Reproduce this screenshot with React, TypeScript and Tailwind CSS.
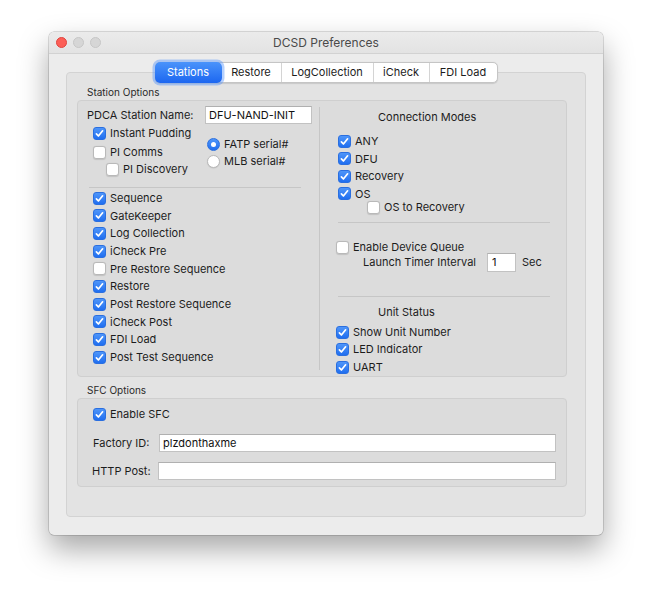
import React from 'react';

const FONT = { fontFamily: 'Inter, "Liberation Sans", Arial, sans-serif' };

function Box({ checked }: { checked: boolean }) {
  if (!checked) {
    return (
      <span className="flex-none w-[13px] h-[13px] rounded-[3px] bg-white border border-[#b9b9b9] shadow-[0_0.5px_1px_rgba(0,0,0,0.12)]" />
    );
  }
  return (
    <span className="flex-none w-[13px] h-[13px] rounded-[3px] bg-gradient-to-b from-[#4e95f9] to-[#1f6ef0] border border-[#2a6fe0] flex items-center justify-center">
      <svg width="11" height="11" viewBox="0 0 11 11" fill="none">
        <path d="M2.4 5.9 L4.4 8 L8.6 2.8" stroke="white" strokeWidth="1.7" strokeLinecap="round" strokeLinejoin="round" />
      </svg>
    </span>
  );
}

function Check({ label, checked, className = '' }: { label: string; checked: boolean; className?: string }) {
  return (
    <div className={`flex items-center gap-[4px] ${className}`}>
      <Box checked={checked} />
      <span className="whitespace-nowrap">{label}</span>
    </div>
  );
}

function Radio({ label, selected }: { label: string; selected: boolean }) {
  return (
    <div className="flex items-center gap-[4px] h-[17px]">
      {selected ? (
        <span className="flex-none w-[13px] h-[13px] rounded-full bg-gradient-to-b from-[#4e95f9] to-[#1f6ef0] border border-[#2a6fe0] flex items-center justify-center">
          <span className="w-[5px] h-[5px] rounded-full bg-white" />
        </span>
      ) : (
        <span className="flex-none w-[13px] h-[13px] rounded-full bg-white border border-[#b9b9b9] shadow-[0_0.5px_1px_rgba(0,0,0,0.12)]" />
      )}
      <span className="whitespace-nowrap">{label}</span>
    </div>
  );
}

function Field({ value, className = '' }: { value: string; className?: string }) {
  return (
    <div className={`bg-white border border-[#c2c2c2] border-t-[#b0b0b0] flex items-center pl-[3px] text-[#111] ${className}`}>
      {value}
    </div>
  );
}

const tabs = [
  { name: 'Stations', w: 'w-[67px]' },
  { name: 'Restore', w: 'w-[59px]' },
  { name: 'LogCollection', w: 'w-[92px]' },
  { name: 'iCheck', w: 'w-[56px]' },
  { name: 'FDI Load', w: 'w-[68px]' },
];

const sequence: [string, boolean][] = [
  ['Sequence', true],
  ['GateKeeper', true],
  ['Log Collection', true],
  ['iCheck Pre', true],
  ['Pre Restore Sequence', false],
  ['Restore', true],
  ['Post Restore Sequence', true],
  ['iCheck Post', true],
  ['FDI Load', true],
  ['Post Test Sequence', true],
];

export default function App() {
  return (
    <div className="w-[652px] h-[600px] bg-white pt-[32px] pl-[49px] text-[11px] text-[#1c1c1c]" style={FONT}>
      <div className="w-[554px] h-[503px] rounded-[5px] bg-[#ececec] shadow-[0_14px_30px_rgba(0,0,0,0.35),0_0_0_0.5px_rgba(0,0,0,0.25)] flex flex-col overflow-hidden">
        {/* title bar */}
        <div className="relative h-[22px] flex-none flex items-center bg-gradient-to-b from-[#ebebeb] to-[#e3e3e3] border-b border-[#d2d2d2]">
          <div className="flex items-center gap-[6px] pl-[7px]">
            <span className="w-[11px] h-[11px] rounded-full bg-[#fc5f57] border border-[#e0443e]" />
            <span className="w-[11px] h-[11px] rounded-full bg-[#d6d6d6] border border-[#c6c6c6]" />
            <span className="w-[11px] h-[11px] rounded-full bg-[#d6d6d6] border border-[#c6c6c6]" />
          </div>
          <div className="absolute inset-0 flex items-center justify-center text-[12px] text-[#4a4a4a]">DCSD Preferences</div>
        </div>

        {/* content */}
        <div className="flex flex-col items-center pt-[8px]">
          <div className="relative z-10 flex h-[21px] bg-white border border-[#c5c5c5] rounded-[5px] shadow-[0_0.5px_1px_rgba(0,0,0,0.12)]">
            {tabs.map((t, i) => (
              <div
                key={t.name}
                className={
                  i === 0
                    ? `${t.w} -my-px -ml-px flex items-center justify-center rounded-[5px] text-white bg-gradient-to-b from-[#4a93fb] to-[#1c66f0] shadow-[0_0_0_2.5px_rgba(90,150,250,0.45)]`
                    : `${t.w} flex items-center justify-center ${i > 1 ? 'border-l border-[#d4d4d4]' : ''}`
                }
              >
                {t.name}
              </div>
            ))}
          </div>

          <div className="-mt-[11px] w-[520px] h-[445px] bg-[#e3e3e3] border border-[#d3d3d3] rounded-[4px] pl-[10px] pr-[18px]">
            <div className="mt-[13px] h-[13px] leading-[13px] pl-[10px] text-[10px] text-[#2a2a2a]">Station Options</div>

            {/* station options group */}
            <div className="mt-px h-[277px] bg-[#dcdcdc] border border-[#cfcfcf] rounded-[4px] flex">
              {/* left column */}
              <div className="w-[241px] flex-none flex flex-col">
                <div className="mt-[5px] flex items-center h-[18px] pl-[9px]">
                  <span className="w-[118px] flex-none">PDCA Station Name:</span>
                  <Field value="DFU-NAND-INIT" className="w-[107px] h-[18px]" />
                </div>
                <div className="flex pl-[15px]">
                  <div className="w-[114px] flex-none flex flex-col">
                    <Check label="Instant Pudding" checked className="h-[17px] mt-[1px]" />
                    <Check label="PI Comms" checked={false} className="h-[17px] mt-[1.5px]" />
                    <Check label="PI Discovery" checked={false} className="h-[17px] ml-[13px]" />
                  </div>
                  <div className="flex flex-col pt-[11.5px]">
                    <Radio label="FATP serial#" selected />
                    <Radio label="MLB serial#" selected={false} />
                  </div>
                </div>
                <div className="mt-[9.5px] ml-[11px] w-[212px] h-px bg-[#c6c6c6]" />
                <div className="mt-[1.5px] pl-[15px] flex flex-col">
                  {sequence.map(([l, c]) => (
                    <Check key={l} label={l} checked={c} className="h-[17.67px]" />
                  ))}
                </div>
              </div>

              <div className="w-px flex-none my-[6px] bg-[#c6c6c6]" />

              {/* right column */}
              <div className="flex-1 flex flex-col">
                <div className="mt-[9px] h-[14px] leading-[14px] pl-[58px]">Connection Modes</div>
                <div className="mt-[8.5px] pl-[18px] flex flex-col">
                  <Check label="ANY" checked className="h-[17.5px]" />
                  <Check label="DFU" checked className="h-[17.5px]" />
                  <Check label="Recovery" checked className="h-[17.5px]" />
                  <Check label="OS" checked className="h-[17.5px]" />
                  <Check label="OS to Recovery" checked={false} className="h-[17px] -mt-[3.5px] ml-[29px]" />
                </div>
                <div className="mt-[5.5px] ml-[18px] w-[212px] h-px bg-[#c6c6c6]" />
                <Check label="Enable Device Queue" checked={false} className="h-[17px] mt-[16.5px] pl-[16px]" />
                <div className="-mt-[2.5px] h-[19px] flex items-center pl-[43px]">
                  <span className="whitespace-nowrap">Launch Timer Interval</span>
                  <Field value="1" className="ml-[11px] w-[29px] h-[19px] pl-[4px]" />
                  <span className="ml-[6px]">Sec</span>
                </div>
                <div className="mt-[24px] ml-[18px] w-[212px] h-px bg-[#c6c6c6]" />
                <div className="mt-[8px] h-[14px] leading-[14px] pl-[58px]">Unit Status</div>
                <div className="mt-[4.5px] pl-[16px] flex flex-col">
                  <Check label="Show Unit Number" checked className="h-[17.5px]" />
                  <Check label="LED Indicator" checked className="h-[17.5px]" />
                  <Check label="UART" checked className="h-[17.5px]" />
                </div>
              </div>
            </div>

            <div className="mt-[7px] h-[13px] leading-[13px] pl-[10px] text-[10px] text-[#2a2a2a]">SFC Options</div>

            {/* SFC group */}
            <div className="mt-px h-[89px] bg-[#dcdcdc] border border-[#cfcfcf] rounded-[4px] flex flex-col pl-[15px] pr-[10px]">
              <Check label="Enable SFC" checked className="h-[17px] mt-[6.5px]" />
              <div className="mt-[11.5px] flex items-center h-[18px]">
                <span className="w-[66px] flex-none">Factory ID:</span>
                <Field value="plzdonthaxme" className="flex-1 h-[18px]" />
              </div>
              <div className="mt-[10px] flex items-center h-[18px]">
                <span className="w-[66px] flex-none -ml-px">HTTP Post:</span>
                <Field value="" className="flex-1 h-[18px]" />
              </div>
            </div>
          </div>
        </div>
      </div>
    </div>
  );
}
